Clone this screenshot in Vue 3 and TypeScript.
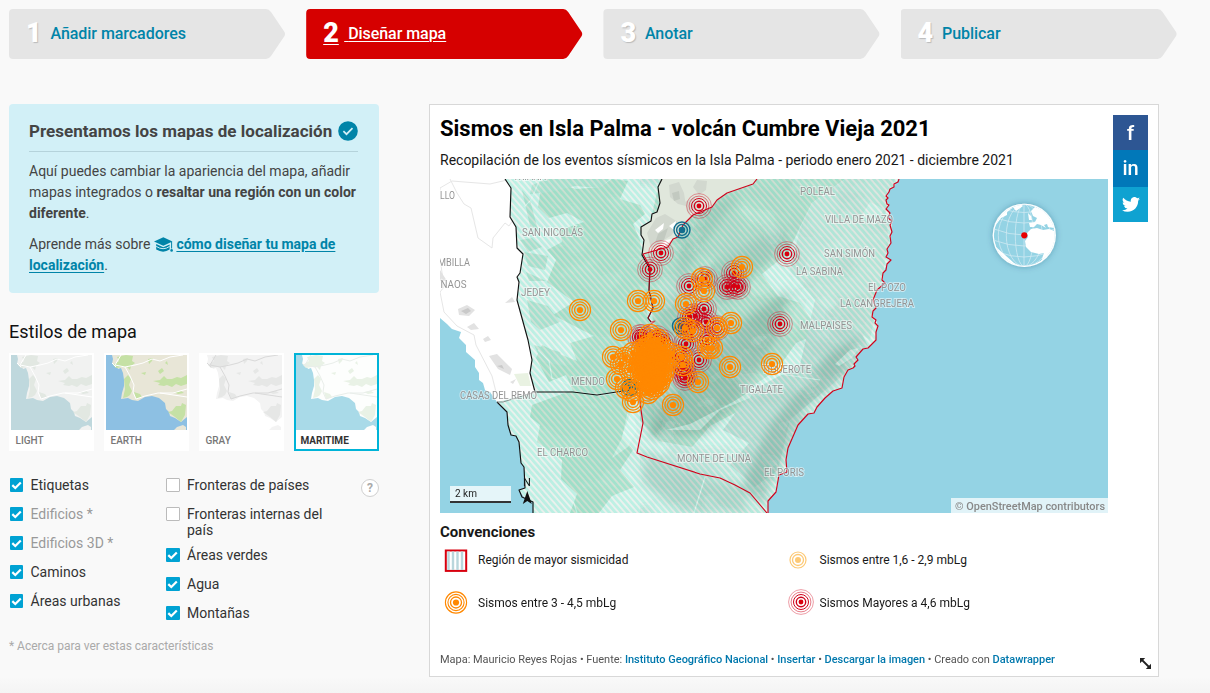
<script setup lang="ts">
interface Step { n: number; label: string; active?: boolean }
interface Layer { label: string; on: boolean; muted?: boolean }
interface Place { t: string; x: number; y: number; w: number }
interface Quake { x: number; y: number; k: 'red' | 'orange' | 'blue' }

const steps: Step[] = [
  { n: 1, label: 'Añadir marcadores' },
  { n: 2, label: 'Diseñar mapa', active: true },
  { n: 3, label: 'Anotar' },
  { n: 4, label: 'Publicar' },
]

const styles = [
  { id: 'light', name: 'LIGHT' },
  { id: 'earth', name: 'EARTH' },
  { id: 'gray', name: 'GRAY' },
  { id: 'maritime', name: 'MARITIME' },
]

const layersA: Layer[] = [
  { label: 'Etiquetas', on: true },
  { label: 'Edificios *', on: true, muted: true },
  { label: 'Edificios 3D *', on: true, muted: true },
  { label: 'Caminos', on: true },
  { label: 'Áreas urbanas', on: true },
]
const layersB: Layer[] = [
  { label: 'Fronteras de países', on: false },
  { label: 'Fronteras internas del país', on: false },
  { label: 'Áreas verdes', on: true },
  { label: 'Agua', on: true },
  { label: 'Montañas', on: true },
]

const places: Place[] = [
  { t: 'LLO', x: 440, y: 199, w: 15 },
  { t: 'TRIANA', x: 513, y: 180, w: 33 },
  { t: 'SAN NICOLÁS', x: 522, y: 236, w: 61 },
  { t: 'MBILLA', x: 438, y: 266, w: 32 },
  { t: 'NAOS', x: 440.5, y: 288, w: 26 },
  { t: 'JEDEY', x: 521, y: 296, w: 29 },
  { t: 'MENDO', x: 571, y: 385, w: 34 },
  { t: 'CASAS DEL REMO', x: 460, y: 399, w: 77 },
  { t: 'EL CHARCO', x: 537, y: 456, w: 51 },
  { t: 'MONTE DE LUNA', x: 677, y: 462, w: 74 },
  { t: 'EL PORIS', x: 764, y: 476, w: 40 },
  { t: 'TIGALATE', x: 740, y: 393, w: 43 },
  { t: 'TIGUEROTE', x: 762, y: 373, w: 49 },
  { t: 'MALPAISES', x: 800, y: 329, w: 52 },
  { t: 'LA CANGREJERA', x: 840, y: 307, w: 74 },
  { t: 'EL POZO', x: 868, y: 291, w: 38 },
  { t: 'LA SABINA', x: 796, y: 275, w: 47 },
  { t: 'SAN SIMÓN', x: 824, y: 257, w: 51 },
  { t: 'VILLA DE MAZO', x: 825, y: 223, w: 68 },
  { t: 'POLEAL', x: 800, y: 195, w: 35 },
]

const make = (k: Quake['k'], pts: number[][]): Quake[] => pts.map(([x, y]) => ({ x, y, k }))

// Dense swarm around the main epicentre
const cluster: number[][] = []
for (let row = 0; row < 11; row++) {
  for (let col = 0; col < 5; col++) {
    const x = 640 + col * 5 + ((row * 7 + col * 3) % 5)
    const y = 345 + row * 3.7 + ((col * 5 + row) % 4)
    if (Math.abs(x - 653) / 16 + Math.abs(y - 363) / 27 < 1.2) cluster.push([x, y])
  }
}

const quakes: Quake[] = [
  ...make('blue', [[682, 230], [680.5, 326]]),
  ...make('red', [
    [699, 206], [661, 253], [650, 269.5], [787, 254], [780, 324], [689, 286], [705, 279], [734, 273],
    [727, 287], [734, 286], [738, 287], [704, 309], [695, 316], [690, 317], [706, 322], [717, 328],
    [686, 344], [699, 360], [684, 375], [683, 369], [680, 357], [640, 337], [657, 338], [707, 340],
    [685, 378], [642, 337], [663, 342], [691, 330],
  ]),
  ...make('orange', [
    [580, 310], [638, 301], [654, 301], [621, 330], [742, 267], [702, 279], [704, 291], [686, 304],
    [731, 323], [717, 328], [685, 328], [693, 331], [712, 348], [708, 348], [730, 367],
    [772, 364], [698, 382], [673, 405], [633, 402], [617, 379], [613, 357], [633, 353], [621, 364],
    [648, 393], [652, 389], [683, 365], [682, 357], [672, 354], [650, 335], [658, 340],
    [630, 370], [639, 385], [656, 386], [625, 358],
  ]),
  ...make('blue', [[630, 387.5]]),
  ...make('orange', [[632, 391], [626, 388]]),
  ...make('orange', cluster),
]

const coast =
  'M505 179H899L895 184 894 187 889 189 887 194 888 198 886 200 889 205 886 209 890 213 888 218 892 225 891 233 890 243 887 249 888 253 886 257 890 260 887 264 883 273 883 282 877 290 874 299 876 308 873 311 873 317 876 320 878 326 876 332 876 340 868 348 863 349 856 357 857 362 854 364 853 368 848 370 844 377 843 380 842 388 833 391 825 398 817 407 814 413 808 414 798 425 788 448 786 460 787 472 779 475 776 492 768 501 768 513H533L533 502 525 498 519 490 525 488 524 467 521 463 519 442 516 436 511 435 508 425 507 412 497 402 535 392 530 373 532 360 528 340 517 300 519 282 517 277 520 273 523 254 517 248 516 227 510 217 511 188Z'
</script>

<template>
  <main class="page">
    <nav class="steps">
      <a v-for="s in steps" :key="s.n" class="step" :class="{ active: s.active }">
        <b class="num">{{ s.n }}</b><span class="step-label">{{ s.label }}</span>
      </a>
    </nav>

    <div class="columns">
      <aside class="side">
        <section class="intro">
          <h2>
            <span>Presentamos los mapas de localización</span>
            <svg width="20" height="20" viewBox="0 0 20 20"><circle cx="10" cy="10" r="9.8" fill="#0084a8" /><path d="M5.4 10.2l3.1 3 6-6" fill="none" stroke="#d2f0f7" stroke-width="1.7" /></svg>
          </h2>
          <p>Aquí puedes cambiar la apariencia del mapa, añadir<br>mapas integrados o <b>resaltar una región con un color<br>diferente</b>.</p>
          <p>Aprende más sobre <svg class="cap" width="19" height="15" viewBox="0 0 19 15"><path d="M9.3.3L18.5 4.6 9.3 8.8 0 4.6z" fill="#0084a8" /><path d="M2.2 7.1L9.3 10.3 15.6 7.4V12.6Q9.3 16.8 2.2 12.6z" fill="#0084a8" /><path d="M2.2 9.4Q9.3 14 15.6 9.4" fill="none" stroke="#d2f0f7" stroke-width="1" /><path d="M17.6 5V11.5" stroke="#0084a8" /><circle cx="17.6" cy="13.4" r="1.3" fill="#0084a8" /></svg> <a>cómo diseñar tu mapa de<br>localización</a>.</p>
        </section>

        <h3>Estilos de mapa</h3>
        <div class="styles">
          <div v-for="s in styles" :key="s.id" class="style" :class="s.id">
            <svg width="81" height="75" viewBox="0 0 81 75">
              <rect class="t-sea" width="81" height="75" />
              <path class="t-land" d="M6 0L7 4 6 9 10 10 12 14 15 13 17 18 18 25 18 31 16 38 15 44 22 43 26 45 32 46 39 42 46 41 53 43 59 48 60 54 63 57 64 61 69 63 75 67 81 62V0ZM68 75L71 72 77 70 80 72 80 75Z" />
              <path class="t-green" d="M11 2L20 0 27 1 26 6 29 8 25 11 24 15 21 12 16 12 10 13 7 10 13 6ZM18 24L22 20 25 24 23 30 26 36 24 40 21 42 17 43 19 34ZM28 37L34 39 36 42 30 44ZM47 26L54 25 58 21 61 24 66 24 71 22 75 23 81 20V29L75 31 70 29 66 32 61 30 58 31 52 30 54 28ZM62 57L66 56 70 51 75 51 76 48 80 50 79 60 75 67 69 62ZM52 16L56 13 58 16 54 19ZM42 4L47 3 46 6 43 9ZM59 8L61 6 62 10ZM35 18L40 17 39 20ZM68 37L75 36 78 38 72 39Z" />
              <path class="t-road" d="M15 0L9 10 19 12 29 10 37 8 46 4 54 6 64 2 77 0M19 12L24 21 28 30 27 37 30 44 39 41 52 38 67 38 81 34M54 38L81 42M6 8L10 12" />
            </svg>
            <span>{{ s.name }}</span>
          </div>
        </div>

        <div class="layers">
          <ul v-for="(list, i) in [layersA, layersB]" :key="i" :class="'col' + i">
            <li v-for="l in list" :key="l.label" :class="{ muted: l.muted }">
              <i class="box" :class="{ on: l.on }"><svg v-if="l.on" width="13" height="14" viewBox="0 0 13 14"><path d="M2.3 7.1l3 2.9 5.5-5.5" fill="none" stroke="#fff" stroke-width="2.2" /></svg></i>
              <span>{{ l.label }}</span>
            </li>
          </ul>
          <span class="help">?</span>
        </div>
        <p class="note">* Acerca para ver estas características</p>
      </aside>

      <section class="chart">
        <div class="chart-main">
          <h1>Sismos en Isla Palma - volcán Cumbre Vieja 2021</h1>
          <p class="desc">Recopilación de los eventos sísmicos en la Isla Palma - periodo enero 2021 - diciembre 2021</p>

          <svg class="map" width="668" height="334" viewBox="440 179 668 334">
            <defs>
              <clipPath id="land"><path :d="coast" /></clipPath>
              <clipPath id="globe"><circle cx="1024.3" cy="235.3" r="30.5" /></clipPath>
              <pattern id="stripe" width="4.7" height="4.7" patternUnits="userSpaceOnUse" patternTransform="rotate(-41)">
                <rect width="3" height="4.7" fill="#6ae4c8" fill-opacity=".38" />
                <rect x="3" width="1.7" height="4.7" fill="#e6e4de" fill-opacity=".35" />
              </pattern>
              <filter id="hills" x="0" y="0" width="1" height="1">
                <feTurbulence type="fractalNoise" baseFrequency=".021 .027" numOctaves="3" seed="8" />
                <feColorMatrix values="0 0 0 0 .44  0 0 0 0 .5  0 0 0 0 .48  2.4 0 0 0 -.9" />
                <feComponentTransfer><feFuncA type="discrete" tableValues="0 .06 .14 .22 .3 .36" /></feComponentTransfer>
              </filter>
              <filter id="glades" x="0" y="0" width="1" height="1">
                <feTurbulence type="fractalNoise" baseFrequency=".025 .03" numOctaves="3" seed="21" />
                <feColorMatrix values="0 0 0 0 1  0 0 0 0 1  0 0 0 0 1  0 3 0 0 -1.3" />
                <feComponentTransfer><feFuncA type="discrete" tableValues="0 0 .2 .45 .6" /></feComponentTransfer>
              </filter>
              <filter id="soft"><feGaussianBlur stdDeviation="5" /></filter>
              <filter id="drop" x="-.3" y="-.3" width="1.6" height="1.6"><feDropShadow dx="0" dy="0" stdDeviation="3" flood-color="#246" flood-opacity=".35" /></filter>

              <g id="q-orange">
                <g fill="none" stroke="#ff8800"><circle r="10.6" stroke-width="1.1" /><circle r="8.1" stroke-width="1.1" /><circle r="5.5" stroke-width="1.3" /></g>
                <circle r="3.1" fill="#ff8800" />
              </g>
              <g id="q-red">
                <g fill="none" stroke="#d0021b"><circle r="12.4" stroke-width=".6" opacity=".65" /><circle r="9.9" stroke-width=".7" opacity=".75" /><circle r="7.5" stroke-width="1" /><circle r="4.7" stroke-width="1.4" /></g>
                <circle r="2.4" fill="#d8000e" />
              </g>
              <g id="q-blue">
                <g fill="none" stroke="#136d8d"><circle r="8" stroke-width="1.4" /><circle r="5.4" stroke-width="1.5" /></g>
                <circle r="3.3" fill="#136d8d" />
              </g>
            </defs>

            <rect x="440" y="179" width="668" height="334" fill="#94d3e4" />
            <path d="M440 179H660L540 400 497 402 490 392 485 390 483 383 479 380 479 373 475 367 475 360 466 352 466 345 459 338 461 332 452 329 447 324 440 318Z" fill="#fff" />
            <g fill="none" stroke="#e6e6e6"><path d="M450 179L457 193 464 204 471 208 478 238 492 248 493 238 505 223 509 226 523 205 530 190 538 179" /><path d="M440 258L444 287 440 292 444 312 457 326 474 335 476 345 492 376 496 392" /><path d="M440 200V188L452 181 490 184 507 180" /></g>
            <path d="M440 270L447 281 440 281ZM458 309L467 305 475 310 469 316 459 315ZM467 327L474 323 479 329 471 330ZM505 303L512 297 515 302ZM489 356L497 354 512 369 510 375 498 369ZM510 382L516 379 513 384ZM483 339L488 336 491 340 485 342Z" fill="#e2e2e2" />
            <path d="M461 311L468 308 471 311 466 314ZM497 366L502 365 504 369Z" fill="#c9c9c9" />
            <path d="M514 374L528 373 531 386 520 386Z" fill="#e9f2e2" />

            <g clip-path="url(#land)">
              <rect x="440" y="179" width="460" height="334" fill="#f0f7f5" />
              <path d="M541 188L560 184 576 189 600 187 612 179 628 181 620 199 640 205 645 214 633 224 640 240 642 253 655 280 646 310 656 345 636 389 598 394 573 391 566 375 549 382 536 358 542 345 562 355 577 361 570 343 594 336 582 330 553 315 574 302 547 282 556 260 547 250 562 242 560 230 584 222 567 213 549 218 538 207Z" fill="#bfdcc9" />
              <path d="M532 405L570 391 600 396 630 391 633 405 622 436 633 450 620 470 634 487 612 496 599 513H570L577 494 561 479 562 460 537 442 540 425 530 417Z" fill="#bfdcc9" />
              <path d="M532 185L547 179H610L600 188 575 186 550 192 530 194ZM520 240L532 238 542 247 528 252ZM526 272L546 281 529 281ZM534 345L560 352 566 366 542 362ZM527 300L548 306 560 322 540 330 531 322ZM522 190L530 200 538 230 530 226ZM524 252L548 256 545 270 528 266Z" fill="#c7dfd2" />
              <path d="M660 179H845L812 203 799 229 788 253 762 274 778 296 800 303 820 333 796 343 777 370 754 385 737 412 710 426 692 447 659 441 640 420 639 389 656 345 644 250Z" fill="#c4dccb" />
              <path d="M815 300L850 310 870 350 835 382 790 420 778 470 755 487 730 465 749 443 723 430 751 391 800 365Z" fill="#cdd8d5" />
              <path d="M845 179H895L885 215 889 240 880 290 870 340 840 320 815 300 790 270 800 229 812 203Z" fill="#dce5e0" />
              <g fill="#6c867a" filter="url(#soft)">
                <path d="M675 240L715 200 740 195 706 243 680 282ZM700 270L780 228 790 240 720 310ZM660 300L680 290 700 350 670 420 650 440 642 400Z" opacity=".32" />
                <path d="M680 380L750 315 790 290 775 340 740 400 705 434 650 439 660 400Z" opacity=".56" />
                <path d="M862 335L842 375 805 408 782 460 765 505 740 490 770 425 830 352Z" opacity=".5" />
                <path d="M648 450L680 470 740 486 750 513 680 513 640 480Z" opacity=".36" />
              </g>
              <rect x="640" y="179" width="260" height="334" filter="url(#hills)" />
              <rect x="505" y="179" width="140" height="334" filter="url(#hills)" opacity=".2" />
              <rect x="640" y="179" width="260" height="334" filter="url(#glades)" opacity=".42" />
              <rect x="505" y="179" width="135" height="334" filter="url(#glades)" opacity=".25" />
              <path d="M870 202L860 218 875 225 884 209ZM835 364L850 350 859 348 852 358 839 366ZM666 430L690 424 733 402 755 388 750 398 720 410 700 430ZM630 400L637 430 628 447 612 458 622 438Z" fill="#fff" fill-opacity=".5" />
              <g fill="none" stroke="#fff" stroke-opacity=".7" stroke-width="1.2"><path d="M538 350L549 361 552 378 568 384M560 480L573 500 577 513M705 477L694 513M540 179L531 200 524 207M820 380L780 374 750 390" /></g>
              <path :d="coast" fill="url(#stripe)" />
              <path d="M662 179L658 187 660 203 657 212 652 214 651 221 641 227 641 235 644 240 642 254 668 247 673 239 678 237 683 225 693 215 712 207 717 200 727 193 753 184 757 179Z" fill="#e0e7dc" />
              <path d="M669 185L679 182 684 193 686 206 678 204 670 197ZM656 218L665 214 678 222 672 235 651 248 647 233ZM697 180L707 181 706 190 699 195 693 187ZM685 202L694 197 698 208 688 214Z" fill="#d2d8cf" />
              <path d="M672 193L679 191 680 199 674 201ZM658 234L668 228 664 240 655 243Z" fill="#c2c9c0" />
              <path d="M655 230L664 223 663 229 658 233ZM669 226L676 221 675 231ZM666 240L672 239 665 246 658 248Z" fill="#fff" />
            </g>

            <g fill="none" stroke="#111" stroke-width="1.15" stroke-linejoin="round">
              <path d="M505 179L511 188 510 217 516 227 517 248 523 254 520 273 517 277 519 282 517 300 528 340 532 360 530 373 535 392H573L597 395 623 391 640 389" />
              <path d="M662 179L658 187 660 203 657 212 652 214 651 221 641 227 641 235 644 240 642 255 650 269 649 290 653 308 648 318 651 322" />
              <path d="M497 402L507 412 508 425 511 435 516 436 519 442 521 463 524 467 525 488 519 490 522 497 533 502V513" />
              <path d="M497 402H503L535 392" stroke="#777" stroke-width=".8" />
            </g>
            <g fill="none" stroke="#d0021b" stroke-width="1.15" stroke-linejoin="round">
              <path d="M757 179L753 184 727 193 717 200 712 207 693 215 683 225 678 237 673 239 668 247 643 254 650 267" />
              <path d="M650 267L649 290 653 308 648 318 651 322 655 321 643 330" stroke-opacity=".6" />
              <path d="M640 385V400L641 410 643 423 637 453 647 457 700 474 720 478 735 485 750 493 767 513" />
              <path d="M899 179L898 182 894 184 894 187 890 189 889 192 886 196 888 198 886 200 887 204 889 205 886 209 890 213 888 218 892 221 890 225 892 232 890 236 891 243 887 249 888 253 886 257 891 260 887 264 886 270 883 273 882 280 885 283 877 290 873 300 876 308 873 311 872 317 876 320 875 323 878 326 876 332 876 340 868 348 863 349 856 357 858 360 854 364 855 366 853 368 848 370 844 377 842 388 833 391 825 398 817 407 814 413 808 414 798 425 788 448 786 460 787 472 779 475 776 492 768 501V513" />
            </g>

            <g class="places">
              <text v-for="p in places" :key="p.t" :x="p.x" :y="p.y" :textLength="p.w" lengthAdjust="spacingAndGlyphs">{{ p.t }}</text>
            </g>

            <use v-for="(q, i) in quakes" :key="i" :href="'#q-' + q.k" :x="q.x" :y="q.y" />

            <circle cx="1024.3" cy="235.3" r="31.6" fill="#fff" filter="url(#drop)" />
            <g clip-path="url(#globe)">
              <circle cx="1024.3" cy="235.3" r="30.5" fill="#94d3e4" />
              <g fill="none" stroke="#cfeaf2" stroke-width=".8"><path d="M1024 204V267M994 229Q1024 241 1055 229M993 240Q1024 252 1056 240M996 218Q1024 228 1052 218M1003 209Q1024 216 1046 209M998 252Q1024 262 1050 252" /><ellipse cx="1024.3" cy="235.3" rx="9" ry="31" /><ellipse cx="1024.3" cy="235.3" rx="18" ry="31" /><ellipse cx="1024.3" cy="235.3" rx="26" ry="31" /></g>
              <path d="M1027 233L1031 229 1037 228 1043 230 1049 229 1057 232V262L1041 262 1044 253 1039 254 1031 252 1026 247 1025 241 1028 237ZM1029 223L1035 222 1037 218 1033 216 1031 211 1035 207 1043 209 1052 221 1054 228 1048 227 1047 224 1044 225 1046 228 1041 225 1037 224 1034 227 1030 227ZM1028 213L1031 216 1032 220 1029 220ZM993 229L998 218 1006 209 1012 208 1007 212 1007 215 1001 218ZM1013 207L1020 204 1023 206 1016 211ZM996 247L1005 255 1014 263 1022 267H995Z" fill="#fff" />
            </g>
            <circle cx="1024.3" cy="235.3" r="3.1" fill="#e80000" />

            <text x="523" y="486" class="north">N</text>
            <path d="M527.3 491L531.8 504 527.3 501 522.8 504Z" fill="#111" />
            <rect x="450" y="486" width="61" height="15" fill="#fff" fill-opacity=".76" />
            <rect x="450" y="501" width="61" height="2" fill="#333" />
            <text x="455" y="497" class="scale">2 km</text>
            <rect x="951" y="498" width="157" height="15" fill="#fff" fill-opacity=".72" />
            <text x="955" y="510" class="attrib" textLength="150" lengthAdjust="spacingAndGlyphs">© OpenStreetMap contributors</text>
          </svg>

          <h4>Convenciones</h4>
          <div class="legend">
            <div class="item"><svg width="32" height="28" viewBox="-16 -14 32 28"><rect x="-10.2" y="-9.5" width="20.4" height="20.4" fill="#fff" stroke="#d8000e" stroke-width="2" /><path d="M-7.5-8.5V10M-3-8.5V10M1.5-8.5V10M6-8.5V10" stroke="#b9d6dc" stroke-width="2.4" /></svg>Región de mayor sismicidad</div>
            <div class="item"><svg width="32" height="28" viewBox="-16 -14 32 28"><g fill="none" stroke="#fdc975"><circle r="8" stroke-width="1.2" /><circle r="5.5" stroke-width="1.3" /></g><circle r="3" fill="#fdc975" /></svg>Sismos entre 1,6 - 2,9 mbLg</div>
            <div class="item"><svg width="32" height="28" viewBox="-16 -13.5 32 28"><use href="#q-orange" /></svg>Sismos entre 3 - 4,5 mbLg</div>
            <div class="item big"><svg width="32" height="28" viewBox="-16 -13 32 28"><use href="#q-red" /></svg>Sismos Mayores a 4,6 mbLg</div>
          </div>
          <footer>
            <span>Mapa: Mauricio Reyes Rojas • Fuente: <a>Instituto Geográfico Nacional</a> • <a>Insertar</a> • <a>Descargar la imagen</a> • Creado con <a>Datawrapper</a></span>
          </footer>
        </div>
        <div class="social">
          <span class="fb">f</span>
          <span class="li">in</span>
          <span class="tw"><svg width="18" height="15" viewBox="0 0 24 20"><path fill="#fff" d="M24 2.4a9.8 9.8 0 0 1-2.8.8A5 5 0 0 0 23.3.5a9.9 9.9 0 0 1-3.1 1.2 4.9 4.9 0 0 0-8.4 4.5A14 14 0 0 1 1.7 1a4.9 4.9 0 0 0 1.5 6.6 4.9 4.9 0 0 1-2.2-.6 4.9 4.9 0 0 0 3.9 4.9 5 5 0 0 1-2.2.1 4.9 4.9 0 0 0 4.6 3.4A9.9 9.9 0 0 1 0 17.5a14 14 0 0 0 7.5 2.2c9.1 0 14.3-7.7 14-14.6A10 10 0 0 0 24 2.4z" /></svg></span>
        </div>
        <svg class="resize" width="13" height="13" viewBox="0 0 13 13"><path d="M3 3L10 10" stroke="#222" stroke-width="1.8" /><path d="M1 1H6.2L1 6.2ZM12 12V6.8L6.8 12Z" fill="#222" /></svg>
      </section>
    </div>
  </main>
</template>

<style>
body { background: #f9f9f9; }
</style>

<style scoped>
.page { box-sizing: border-box; width: 1210px; height: 693px; overflow: hidden; padding: 9px 9px 0; background: linear-gradient(#f9f9f9 677px, #f4f4f4 693px); font-family: Roboto, "Liberation Sans", sans-serif; color: #333; }
h1, h2, h3, h4, p, ul { margin: 0; padding: 0; }
.steps { display: flex; gap: 20.2px; }
.step { display: flex; align-items: center; box-sizing: border-box; flex: none; width: 277px; height: 50px; padding: 0 0 2px 17px; background: #e5e5e5; color: #0084a8; font-size: 16px; font-weight: 500; letter-spacing: -.05px; clip-path: path("M4 0H257Q260 0 262 3L275.500 23Q276.500 25 275.500 27L262 47Q260 50 257 50H4Q0 50 0 46V4Q0 0 4 0Z"); }
.num { width: 17px; margin-right: 7.5px; font-size: 27px; font-weight: 900; line-height: 30px; color: #fff; text-shadow: 1px 1px 1px #bbb; }
.step-label { white-space: pre; }
.active { background: #d60000; color: #fff; }
.active .num { margin-right: 4px; text-shadow: none; }
.active .num, .active .step-label { text-decoration: underline; text-decoration-thickness: 1px; text-underline-offset: 2px; }
.active .step-label::before { content: " "; }

.columns { display: flex; margin-top: 45px; gap: 50px; align-items: flex-start; }
.side { width: 370px; }
.intro { box-sizing: border-box; height: 189px; padding: 16px 20px 0; border-radius: 4px; background: #d2f0f7; color: #444; }
.intro h2 { display: flex; justify-content: space-between; align-items: center; box-sizing: border-box; height: 32px; margin: 0 1px 9px 0; padding-bottom: 10px; border-bottom: 1px solid #b5d3db; font-size: 17px; font-weight: 700; letter-spacing: .02px; white-space: nowrap; }
.intro p { font-size: 14px; line-height: 21px; margin-bottom: 10px; white-space: nowrap; letter-spacing: .01px; }
.intro p b, .intro a { letter-spacing: 0; }
.intro a { color: #0084a8; font-weight: 700; text-decoration: underline; text-underline-offset: 2px; }
.cap { vertical-align: -3px; }
h3 { margin-top: 28px; font-size: 18px; line-height: 22px; font-weight: 400; color: #111; }
.styles { display: flex; gap: 10px; margin-top: 10px; }
.style { box-sizing: border-box; width: 85px; height: 98px; border: 2px solid #fff; background: #fff; font-size: 10px; font-weight: 500; color: #777; }
.style svg { display: block; }
.style span { display: block; padding-left: 4.5px; line-height: 21px; }
.t-road { fill: none; stroke-width: 1; }
.light .t-sea { fill: #bfd8dd; } .light .t-land { fill: #f1f2f1; } .light .t-green { fill: #e2e8e2; } .light .t-road { stroke: #fff; }
.earth .t-sea { fill: #8dc0e3; } .earth .t-land { fill: #e8e6d7; } .earth .t-green { fill: #c5e1a5; } .earth .t-road { stroke: #fff; }
.gray .t-sea { fill: #fff; } .gray .t-land { fill: #f3f3f3; } .gray .t-green { fill: #e6e7e6; } .gray .t-road { stroke: #d9d9d9; }
.maritime .t-sea { fill: #a9dae8; } .maritime .t-land { fill: #fdfefd; } .maritime .t-green { fill: #e9f2e6; } .maritime .t-road { stroke: #e9eeea; }
.maritime { border-color: #00b4d8; color: #333; font-weight: 700; }

.layers { display: flex; margin-top: 26px; height: 146px; }
.layers ul { list-style: none; }
.col0 { width: 156px; padding-left: 1px; }
.col1 { width: 178px; }
.layers li { display: flex; align-items: flex-start; font-size: 14px; line-height: 16px; margin-bottom: 13px; color: #333; }
.col1 li:nth-child(2) { margin-bottom: 9px; }
.layers li.muted { color: #999; }
.layers li span { width: 150px; }
.box { flex: none; box-sizing: border-box; width: 14px; height: 14px; margin: 1px 7px 0 0; border: 1px solid #bbb; background: #fff; border-radius: 1px; }
.col0 .box { width: 13px; margin-right: 7.5px; }
.box.on { border: 0; background: #00a2d3; }
.box svg { display: block; }
.help { box-sizing: border-box; width: 18px; height: 18px; margin: 2px 0 0 17px; border: 1px solid #d0d0d0; border-radius: 50%; background: #fff; font-size: 12px; font-weight: 700; line-height: 16px; text-align: center; color: #aaa; }
.note { margin-top: 16px; font-size: 12px; line-height: 14px; letter-spacing: -.02px; color: #aaa; }

.chart { position: relative; display: flex; box-sizing: border-box; width: 730px; height: 573px; border: 1px solid #d8d8d8; background: #fff; padding: 10px; }
.chart-main { width: 668px; margin-right: 5px; }
h1 { padding-top: 1px; font-size: 22px; line-height: 26px; font-weight: 700; color: #000; white-space: nowrap; }
.desc { margin-top: 9px; font-size: 14px; line-height: 18px; color: #181818; white-space: nowrap; }
.map { display: block; margin-top: 10px; }
.places { font-size: 10px; fill: #949494; stroke: #fff; stroke-opacity: .5; stroke-width: 2px; paint-order: stroke; }
.north { font-size: 11px; fill: #111; }
.scale { font-size: 10px; fill: #222; }
.attrib { font-size: 11px; font-weight: 500; fill: #888; }
h4 { margin-top: 10px; font-size: 15px; line-height: 18px; color: #181818; }
.legend { display: grid; grid-template-columns: 341.5px 300px; grid-template-rows: 38px 48px; align-items: center; }
.item { display: flex; align-items: center; font-size: 12px; color: #181818; white-space: nowrap; }
.item svg { margin-right: 6px; overflow: visible; }
.item.big svg { transform: translateX(3px); }
footer { margin-top: 25px; font-size: 11px; line-height: 16px; color: #555; letter-spacing: -.025px; white-space: nowrap; }
footer a { color: #0078ad; font-weight: 500; }
.social { display: flex; flex-direction: column; width: 35px; }
.social span { display: flex; align-items: center; justify-content: center; height: 35px; color: #fff; font-size: 21px; }
.social .fb { background: #2d5693; font-weight: 500; }
.social .li { box-sizing: border-box; padding-bottom: 2px; background: #0178b9; height: 37px; font-weight: 500; font-size: 20px; }
.social .tw { background: #0fa2d1; }
.resize { position: absolute; right: 6px; bottom: 6px; }
</style>
